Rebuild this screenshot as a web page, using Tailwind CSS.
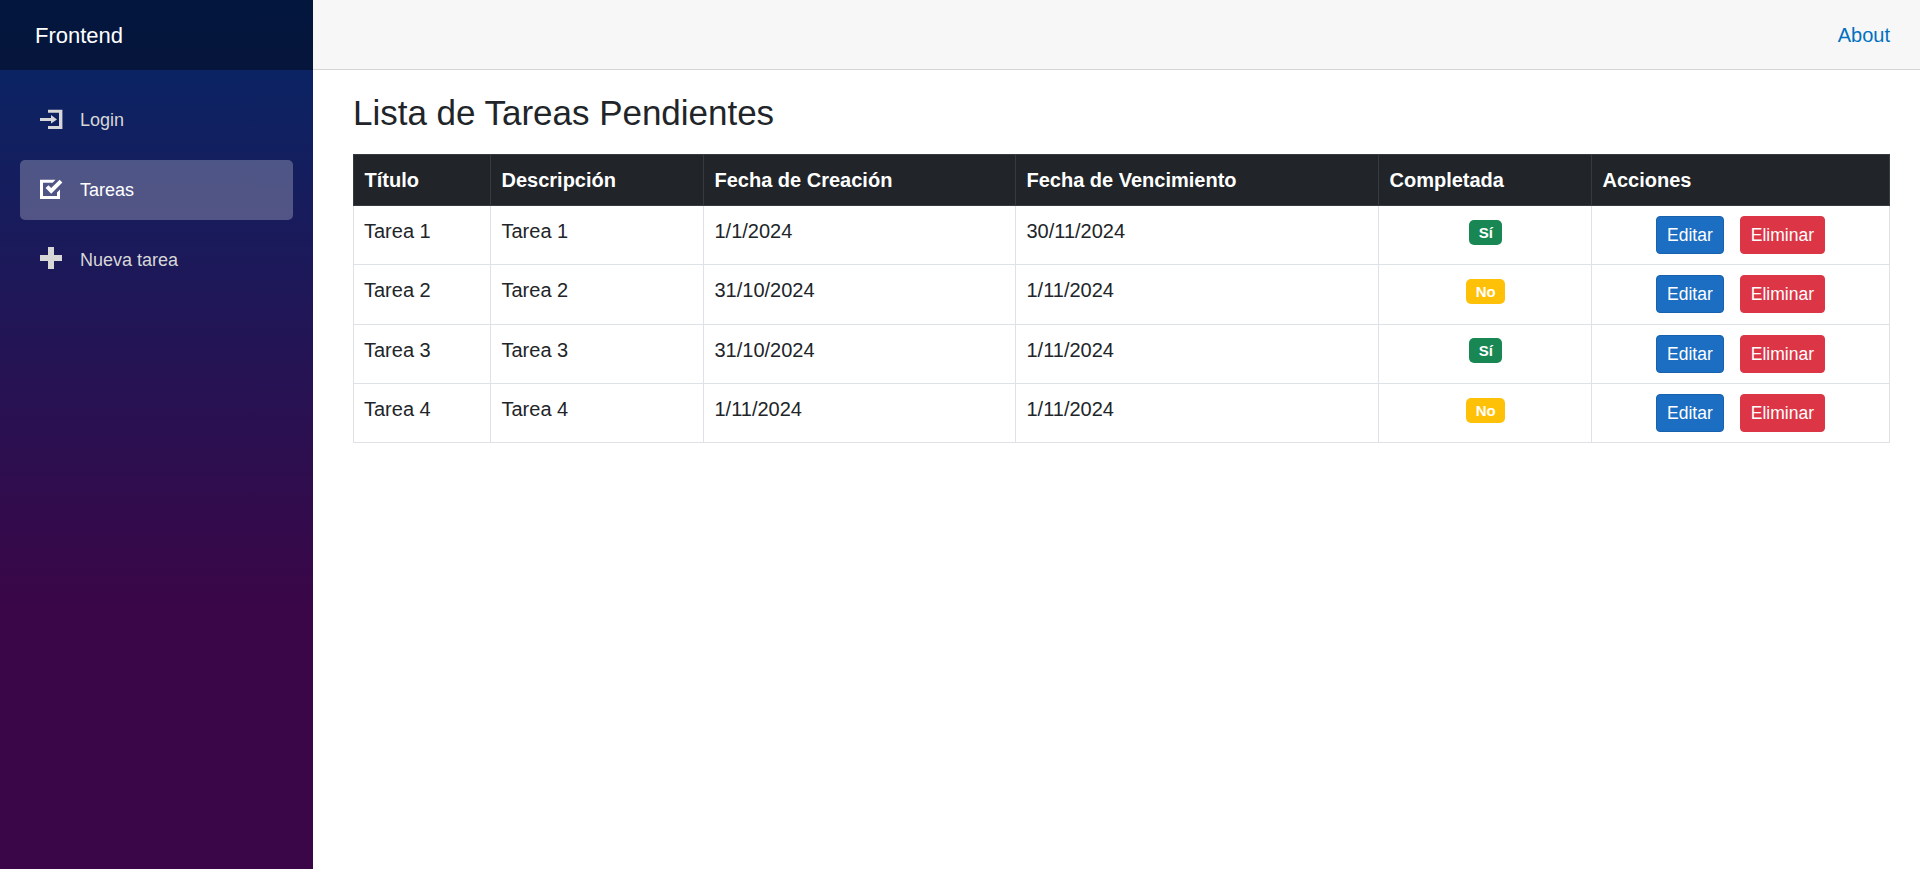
<!DOCTYPE html>
<html lang="es">
<head>
<meta charset="utf-8">
<title>Tareas</title>
<script src="https://cdn.jsdelivr.net/npm/@tailwindcss/browser@4"></script>
</head>
<body class="flex h-screen overflow-hidden bg-white font-['Liberation_Sans',Arial,sans-serif] text-[20px] leading-[30px] text-[#212529]">
  <aside class="flex h-full w-[313px] shrink-0 flex-col bg-[linear-gradient(180deg,#052767_0%,#3a0647_70%)]">
    <div class="flex h-[70px] items-center bg-black/40 pl-[35px]">
      <a class="text-[22px] leading-[33px] text-white">Frontend</a>
    </div>
    <nav class="flex flex-col gap-[10px] px-5 pt-5 text-[18px] text-[#d7d7d7]">
      <a class="flex h-[60px] items-center pl-5">
        <svg class="h-5 w-[22px] shrink-0 overflow-visible" viewBox="0 0 22 20" fill="currentColor"><path d="M8-.3h14.4V19H8v-3h11V2.700H8zM11 5l6 4.500-6 4v-2.500H0V8h11z"/></svg>
        <span class="pl-[18px]">Login</span>
      </a>
      <a class="flex h-[60px] items-center rounded-[5px] bg-white/25 pl-5 text-white">
        <svg class="h-5 w-[22px] shrink-0 overflow-visible" viewBox="0 0 22 20" fill="currentColor"><path d="M0-.3h15.500L12.700 2.700H3V16h14v-3.500l3-3V19H0zM19.600-.3L11.200 8.100 8.400 5.300 5.600 8.100l5.600 5.600L22.400 2.500z"/></svg>
        <span class="pl-[18px]">Tareas</span>
      </a>
      <a class="flex h-[60px] items-center pl-5">
        <svg class="mb-1 h-[22px] w-[22px] shrink-0" viewBox="0 0 22 22" fill="currentColor"><path d="M8 0h6v8h8v6h-8v8H8v-8H0V8h8z"/></svg>
        <span class="pl-[18px]">Nueva tarea</span>
      </a>
    </nav>
  </aside>
  <main class="flex min-w-0 flex-1 flex-col">
    <header class="flex h-[70px] shrink-0 items-center justify-end border-b border-[#d6d5d5] bg-[#f7f7f7] pr-[30px]">
      <a class="text-[#0071c1]">About</a>
    </header>
    <article class="pt-[22px] pr-[30px] pl-10">
      <h3 class="mb-5 text-[35px] leading-[42px] tracking-[-0.02px]">Lista de Tareas Pendientes</h3>
      <table class="w-[1537px] table-fixed border-separate border-spacing-0 text-left [&_td]:border-r [&_td]:border-b [&_td]:border-[#dee2e6] [&_td]:pr-[10px] [&_td]:pl-[10.5px] [&_td]:pt-[10px] [&_td]:align-top [&_td:first-child]:border-l [&_td:first-child]:pl-[10px] [&_td:last-child]:pl-[10px] [&_th]:border-y [&_th]:border-r [&_th]:border-[#373b3e] [&_th]:bg-[#212529] [&_th]:pr-[10px] [&_th]:pl-[10.5px] [&_th]:font-bold [&_th]:text-white [&_th:first-child]:border-l">
        <colgroup><col class="w-[138px]"><col class="w-[213px]"><col class="w-[312px]"><col class="w-[363px]"><col class="w-[213px]"><col class="w-[298px]"></colgroup>
        <thead>
          <tr class="h-[52px]"><th>Título</th><th>Descripción</th><th>Fecha de Creación</th><th>Fecha de Vencimiento</th><th>Completada</th><th>Acciones</th></tr>
        </thead>
        <tbody>
          <tr class="h-[59px]">
            <td>Tarea 1</td><td>Tarea 1</td><td>1/1/2024</td><td>30/11/2024</td>
            <td><div class="flex justify-center pt-1 pl-px"><span class="w-[33px] rounded-[5px] bg-[#198754] py-[5px] text-center text-[15px] leading-[15px] font-bold text-white">Sí</span></div></td>
            <td><div class="flex justify-center gap-4 text-[17.5px] leading-[26px] text-white"><button class="rounded-[4px] border border-[#1861ac] bg-[#1b6ec2] px-[10px] py-[5px]">Editar</button><button class="rounded-[4px] border border-[#dc3545] bg-[#dc3545] px-[10px] py-[5px]">Eliminar</button></div></td>
          </tr>
          <tr class="h-[60px]">
            <td>Tarea 2</td><td>Tarea 2</td><td>31/10/2024</td><td>1/11/2024</td>
            <td><div class="flex justify-center pt-1 pl-px"><span class="w-[39px] rounded-[5px] bg-[#ffc107] py-[5px] text-center text-[15px] leading-[15px] font-bold text-white">No</span></div></td>
            <td><div class="flex justify-center gap-4 text-[17.5px] leading-[26px] text-white"><button class="rounded-[4px] border border-[#1861ac] bg-[#1b6ec2] px-[10px] py-[5px]">Editar</button><button class="rounded-[4px] border border-[#dc3545] bg-[#dc3545] px-[10px] py-[5px]">Eliminar</button></div></td>
          </tr>
          <tr class="h-[59px]">
            <td>Tarea 3</td><td>Tarea 3</td><td>31/10/2024</td><td>1/11/2024</td>
            <td><div class="flex justify-center pt-[3px] pl-px"><span class="w-[33px] rounded-[5px] bg-[#198754] py-[5px] text-center text-[15px] leading-[15px] font-bold text-white">Sí</span></div></td>
            <td><div class="flex justify-center gap-4 text-[17.5px] leading-[26px] text-white"><button class="rounded-[4px] border border-[#1861ac] bg-[#1b6ec2] px-[10px] py-[5px]">Editar</button><button class="rounded-[4px] border border-[#dc3545] bg-[#dc3545] px-[10px] py-[5px]">Eliminar</button></div></td>
          </tr>
          <tr class="h-[59px]">
            <td>Tarea 4</td><td>Tarea 4</td><td>1/11/2024</td><td>1/11/2024</td>
            <td><div class="flex justify-center pt-1 pl-px"><span class="w-[39px] rounded-[5px] bg-[#ffc107] py-[5px] text-center text-[15px] leading-[15px] font-bold text-white">No</span></div></td>
            <td><div class="flex justify-center gap-4 text-[17.5px] leading-[26px] text-white"><button class="rounded-[4px] border border-[#1861ac] bg-[#1b6ec2] px-[10px] py-[5px]">Editar</button><button class="rounded-[4px] border border-[#dc3545] bg-[#dc3545] px-[10px] py-[5px]">Eliminar</button></div></td>
          </tr>
        </tbody>
      </table>
    </article>
  </main>
</body>
</html>
